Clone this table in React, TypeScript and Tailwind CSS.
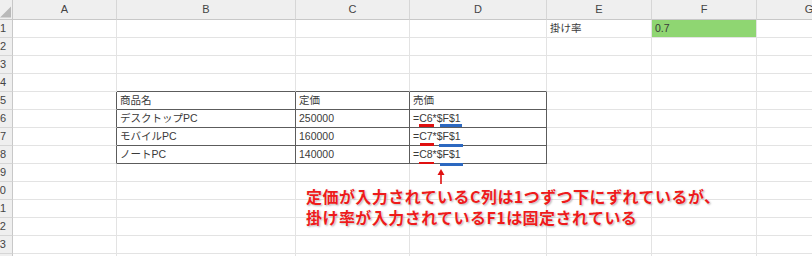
const cols = ["A", "B", "C", "D", "E", "F", "G"];
const rowCount = 14;

type Cell = { text?: string; green?: boolean };

const data: Record<string, Cell> = {
  E1: { text: "掛け率" },
  F1: { text: "0.7", green: true },
  B5: { text: "商品名" },
  C5: { text: "定価" },
  D5: { text: "売価" },
  B6: { text: "デスクトップPC" },
  C6: { text: "250000" },
  D6: { text: "=C6*$F$1" },
  B7: { text: "モバイルPC" },
  C7: { text: "160000" },
  D7: { text: "=C7*$F$1" },
  B8: { text: "ノートPC" },
  C8: { text: "140000" },
  D8: { text: "=C8*$F$1" },
};

const inTable = (c: string, r: number) => ["B", "C", "D"].includes(c) && r >= 5 && r <= 8;

function cellBorder(c: string, r: number) {
  if (inTable(c, r)) return "border-r border-b border-[#5c5c5c]";
  if (["B", "C", "D"].includes(c) && r === 4) return "border-r border-b border-r-[#e3e3e3] border-b-[#5c5c5c]";
  if (c === "A" && r >= 5 && r <= 8) return "border-r border-b border-r-[#5c5c5c] border-b-[#e3e3e3]";
  return "border-r border-b border-[#e3e3e3]";
}

export default function App() {
  return (
    <div className="relative w-[812px] h-[256px] overflow-hidden bg-white font-['Liberation_Sans','Noto_Sans_CJK_JP',sans-serif]">
      <div className="grid grid-cols-[13px_104px_179px_114px_137px_105px_105px_105px] grid-rows-[20px_repeat(14,18px)] w-max">
        {/* corner */}
        <div className="bg-[#efefef] border-r border-b border-[#c8c8c8] flex items-end justify-end">
          <svg width="12" height="12" viewBox="0 0 12 12" className="mb-[1px] mr-[1px]">
            <polygon points="0,12 12,12 12,0" fill="#b9b9b9" />
          </svg>
        </div>
        {cols.map((c) => (
          <div
            key={c}
            className="bg-[#efefef] border-r border-b border-r-[#d6d6d6] border-b-[#c8c8c8] flex items-center justify-center text-[11px] text-[#444]"
          >
            {c}
          </div>
        ))}
        {Array.from({ length: rowCount }, (_, i) => i + 1).map((r) => (
          <Row key={r} r={r} />
        ))}
      </div>

      {/* annotations */}
      <div className="absolute inset-0 pointer-events-none">
        <div className="absolute left-[419px] top-[124px] w-[15px] h-[2.5px] bg-[#e01010]" />
        <div className="absolute left-[440px] top-[124px] w-[22px] h-[2.5px] bg-[#2c68c0]" />
        <div className="absolute left-[420px] top-[143px] w-[14px] h-[2.5px] bg-[#e01010]" />
        <div className="absolute left-[439px] top-[144px] w-[24px] h-[2.5px] bg-[#2c68c0]" />
        <div className="absolute left-[419px] top-[161.5px] w-[15px] h-[2.5px] bg-[#e01010]" />
        <div className="absolute left-[440px] top-[163px] w-[23px] h-[2.5px] bg-[#2c68c0]" />
        <svg className="absolute left-[437px] top-[169px]" width="8" height="16" viewBox="0 0 8 16">
          <line x1="4" y1="4" x2="4" y2="15" stroke="#e01010" strokeWidth="1.6" />
          <polygon points="4,0 7.5,6 0.5,6" fill="#e01010" />
        </svg>
        <div className="absolute left-[306px] top-[186px] flex flex-col text-[16px] leading-[21px] font-bold tracking-[0.45px] text-[#ee1b1b] whitespace-nowrap font-['Noto_Sans_CJK_JP',sans-serif] [text-shadow:0_0_2px_#fff,1px_1px_2px_rgba(0,0,0,0.35)]">
          <span>定価が入力されているC列は1つずつ下にずれているが、</span>
          <span>掛け率が入力されているF1は固定されている</span>
        </div>
      </div>
    </div>
  );
}

function Row({ r }: { r: number }) {
  return (
    <>
      <div className="bg-[#efefef] border-r border-b border-r-[#c8c8c8] border-b-[#d6d6d6] flex items-center justify-end pr-[6px] overflow-hidden whitespace-nowrap text-[11px] text-[#444]">
        {r}
      </div>
      {cols.map((c) => {
        const cell = data[c + r];
        return (
          <div
            key={c}
            className={`${cellBorder(c, r)} ${cell?.green ? "bg-[#8fd672]" : ""} flex items-center pl-[3px] overflow-hidden whitespace-nowrap text-[10.5px] text-[#3a3a3a]`}
          >
            {cell?.text}
          </div>
        );
      })}
    </>
  );
}
